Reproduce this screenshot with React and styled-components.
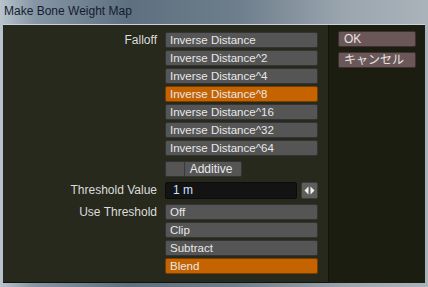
import styled, { createGlobalStyle } from 'styled-components';

const GlobalStyle = createGlobalStyle`
  html, body {
    margin: 0;
    padding: 0;
    background: #8f9ba6;
  }
  * {
    box-sizing: border-box;
  }
`;

const falloffs = [
  'Inverse Distance',
  'Inverse Distance^2',
  'Inverse Distance^4',
  'Inverse Distance^8',
  'Inverse Distance^16',
  'Inverse Distance^32',
  'Inverse Distance^64',
];

const thresholds = ['Off', 'Clip', 'Subtract', 'Blend'];

export default function App() {
  return (
    <Window>
      <GlobalStyle />
      <TitleBar>Make Bone Weight Map</TitleBar>
      <Body>
        <MainPanel>
          <Label>Falloff</Label>
          <OptionList>
            {falloffs.map((f) => (
              <OptionButton key={f} $active={f === 'Inverse Distance^8'}>
                {f}
              </OptionButton>
            ))}
            <Toggle>
              <ToggleBox />
              <ToggleLabel>Additive</ToggleLabel>
            </Toggle>
          </OptionList>

          <Label>Threshold Value</Label>
          <ValueRow>
            <ValueField>1 m</ValueField>
            <ArrowButton>
              <svg width="11" height="9" viewBox="0 0 11 9">
                <path d="M4.5 0.5 L0.5 4.5 L4.5 8.5 Z" fill="#f2f2f2" />
                <path d="M6.5 0.5 L10.5 4.5 L6.5 8.5 Z" fill="#f2f2f2" />
              </svg>
            </ArrowButton>
          </ValueRow>

          <Label>Use Threshold</Label>
          <OptionList>
            {thresholds.map((t) => (
              <OptionButton key={t} $active={t === 'Blend'}>
                {t}
              </OptionButton>
            ))}
          </OptionList>
        </MainPanel>
        <SidePanel>
          <ActionButton>OK</ActionButton>
          <ActionButton>キャンセル</ActionButton>
        </SidePanel>
      </Body>
    </Window>
  );
}

const Window = styled.div`
  width: 428px;
  height: 287px;
  display: flex;
  flex-direction: column;
  padding: 0 3px 4px 3px;
  background: linear-gradient(
    90deg,
    #b9c4cd 0%,
    #8696a4 8%,
    #5e7080 30%,
    #6d7d8b 55%,
    #9aa5ae 80%,
    #aab3ba 100%
  );
  font-family: 'Liberation Sans', Arial, 'Noto Sans CJK JP', sans-serif;
  overflow: hidden;
`;

const TitleBar = styled.div`
  height: 24px;
  flex: none;
  padding: 3px 0 0 1px;
  font-size: 12px;
  color: #141c30;
  line-height: 16px;
`;

const Body = styled.div`
  flex: 1;
  display: flex;
  border-top: 1px solid #c9d3db;
  background: #1c1d11;
`;

const MainPanel = styled.div`
  width: 326px;
  display: grid;
  grid-template-columns: 154px 153px;
  column-gap: 8px;
  row-gap: 5px;
  align-content: start;
  padding-top: 7px;
  background: #27291c;
  border-right: 1px solid #121309;
  border-bottom: 1px solid #121309;
  margin-bottom: 0;
`;

const Label = styled.div`
  text-align: right;
  font-size: 12px;
  line-height: 16px;
  color: #dcdcdc;
  padding-top: 0;
`;

const OptionList = styled.div`
  display: flex;
  flex-direction: column;
  gap: 2px;
`;

const OptionButton = styled.div`
  height: 16px;
  padding-left: 4px;
  font-size: 11.5px;
  line-height: 14px;
  color: #e8e8e8;
  background: ${(p) => (p.$active ? '#c56300' : '#555555')};
  border: 1px solid ${(p) => (p.$active ? '#7a3d00' : '#333333')};
  border-radius: 2px;
  white-space: nowrap;
`;

const Toggle = styled.div`
  margin-top: 3px;
  width: 77px;
  height: 16px;
  display: flex;
  background: #555555;
  border: 1px solid #333333;
  border-radius: 2px;
`;

const ToggleBox = styled.div`
  width: 19px;
  border-right: 1px solid #3a3a3a;
`;

const ToggleLabel = styled.div`
  flex: 1;
  text-align: center;
  font-size: 12px;
  line-height: 14px;
  color: #e8e8e8;
  padding-right: 4px;
`;

const ValueRow = styled.div`
  display: flex;
  gap: 4px;
  height: 17px;
`;

const ValueField = styled.div`
  flex: 1;
  background: #131313;
  border: 1px solid #0b0b0b;
  border-radius: 2px;
  padding-left: 7px;
  font-size: 12px;
  line-height: 15px;
  color: #d2e2ff;
`;

const ArrowButton = styled.div`
  width: 17px;
  display: flex;
  align-items: center;
  justify-content: center;
  background: #5d5f5d;
  border: 1px solid #3b3b3b;
  border-radius: 2px;
`;

const SidePanel = styled.div`
  flex: 1;
  display: flex;
  flex-direction: column;
  gap: 5px;
  padding: 6px 9px 0 9px;
`;

const ActionButton = styled.div`
  height: 16px;
  padding-left: 5px;
  font-size: 12px;
  line-height: 14px;
  color: #e4e4e4;
  background: #6b5757;
  border: 1px solid #3d3030;
  border-radius: 2px;
  white-space: nowrap;
`;
